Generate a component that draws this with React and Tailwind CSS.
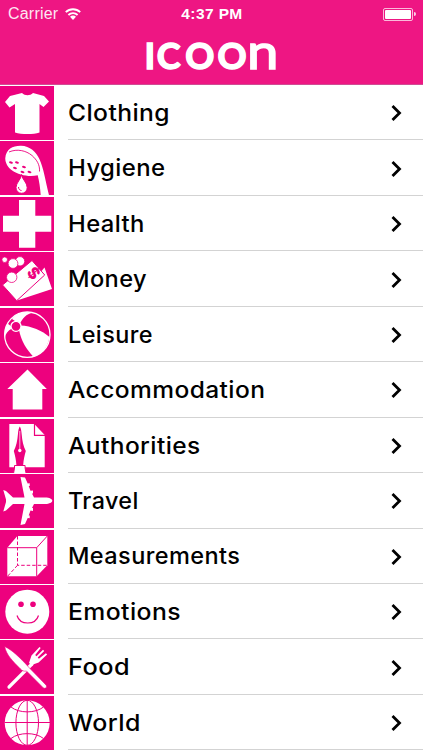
import React from "react";

const PINK = "#ed017e";

// Category icons, all drawn on a 54x54 tile
const ShirtIcon = () => (
    <path
        fill="#fff"
        d="M22 7c3 3 8 3 11 0l11 3 5 5.5-5.5 5.5-4-3v28.500c-6 2-18 2-24.500 0V18l-5.500 3.500L5 16l5-6z"
    />
);

const ShowerIcon = () => (
    <>
        <path
            fill="#fff"
            d="M5.300 17C6 8 13 4.500 21 4.700c9 .3 15 6 18.500 13.500 4 8.500 6 22 9.500 36h-8.300c-.5-8-1.500-14-3-20-8 2-19 0-25.500-4.700C7.500 26 5 21 5.300 17z"
        />
        <path fill="none" stroke={PINK} strokeWidth="0.9" d="M9 11c8-3.500 17-1.500 23 3.500 5 4.500 8 9.500 7.500 16" />
        <g fill={PINK}>
            <ellipse cx="11" cy="21.500" rx="2" ry="1.100" transform="rotate(15 11 21.500)" />
            <ellipse cx="17" cy="21.500" rx="2" ry="1.100" transform="rotate(15 17 21.500)" />
            <ellipse cx="24" cy="26" rx="2" ry="1.100" transform="rotate(15 24 26)" />
            <ellipse cx="15" cy="27" rx="2" ry="1.100" transform="rotate(15 15 27)" />
            <ellipse cx="22.500" cy="31" rx="2" ry="1.100" transform="rotate(15 22.500 31)" />
            <ellipse cx="29.500" cy="31" rx="2" ry="1.100" transform="rotate(15 29.500 31)" />
        </g>
        <path
            fill="#fff"
            stroke={PINK}
            strokeWidth="1"
            d="M21.600 33.500c.5 5 5.600 8 5.600 13.200a5.600 5.600 0 0 1-11.200 0c0-5.200 5.100-8.200 5.600-13.200z"
        />
        <path fill="none" stroke={PINK} strokeWidth="1" d="M18.500 46c0 2 1.200 3.300 3 3.500" />
    </>
);

const CrossIcon = () => <path fill="#fff" d="M19 3h16.300v15.700h16v16h-16v16H19v-16H3v-16h16z" />;

const MoneyIcon = () => (
    <>
        <path fill="#fff" d="M44.500 15.500 52 37 17 48.500z" />
        <path fill="#fff" stroke={PINK} strokeWidth="1" d="M32 8.500 44.700 23 16.700 48.700 2.500 33z" />
        <text
            x="0"
            y="0"
            fill={PINK}
            fontSize="16"
            fontWeight="800"
            textAnchor="middle"
            fontFamily="Inter, sans-serif"
            transform="translate(29.500 25) rotate(48)"
        >
            $
        </text>
        <g fill="#fff" stroke={PINK} strokeWidth="0.8">
            <circle cx="4.700" cy="7.700" r="2.800" />
            <circle cx="20" cy="9.300" r="4.700" />
            <circle cx="13" cy="11.500" r="4.900" />
            <circle cx="11.700" cy="25.300" r="5.200" />
        </g>
    </>
);

const BallIcon = () => (
    <>
        <circle cx="27.300" cy="26.700" r="22.700" fill="none" stroke="#fff" strokeWidth="1.300" />
        <path fill="#fff" d="M15 13C17.500 8 22 4.500 28.500 4c-4-.5-9 .5-13 3.500-2 1.500-3 2.500-3.500 3.500zM20 15.500c2.500-5 6-9.500 13-11-7-1.500-13 0-18 4l-.5 5z" />
        <path fill="#fff" d="M20.500 17.500c11 .5 21.500 5 29 11.500-1.500 10-7.500 17-16 20-7-7.500-12.500-16.500-14.500-27z" />
        <path fill="#fff" d="M11.500 18.500 7.500 15.500C5 20 4 25 4.800 30c.7-4 3-7.500 7.200-9.500z" />
        <circle cx="16" cy="18.300" r="5" fill={PINK} stroke="#fff" strokeWidth="1.300" />
    </>
);

const HouseIcon = () => <path fill="#fff" d="m27.500 6.500 19.300 19.500h-4.500v20.500H12.700V26H7.300z" />;

const PenIcon = () => (
    <>
        <path fill="#fff" d="M9.300 5h25l10.400 11v32.300H9.300z" />
        <path fill="none" stroke={PINK} strokeWidth="1.200" d="M34.500 5v11.300h10.500" />
        <path
            fill={PINK}
            d="M19.800 7.500c1 1.500 1.600 4 1.900 8 .5 6 1.600 11.500 4.100 16.500-1.200 4-2.300 9-2.600 14h-6.800c-.3-5-1.400-10-2.600-14 2.500-5 3.600-10.500 4.100-16.500.3-4 .9-6.500 1.900-8z"
        />
        <path fill="none" stroke="#fff" strokeWidth="0.700" d="M19.800 12v18" />
        <circle cx="19.800" cy="31.500" r="1.700" fill="#fff" />
        <path fill="#fff" stroke={PINK} strokeWidth="1" d="M14.500 46.500h10.600v2.600l1 5.400H13.500l1-5.400z" />
    </>
);

const PlaneIcon = () => (
    <path
        fill="#fff"
        d="M52.300 26.700c0-1.700-3-3.200-7-3.200H34l-2-4h1v-3l-2.500.3-1.800-4.800h1v-2.800l-2 .2L25 3.500 20.500 3l4 20.500H13L6 17l-2.700-1 2.700 9.500v2.400L3.300 37.500 6 36.500l7-6.500h11.500L20.500 51l4.500-1 2.700-6 2 .3v-2.900h-1l1.800-4.900 2.500.4v-3h-1l2-4h11.300c4 0 7-1.600 7-3.200z"
    />
);

const CubeIcon = () => (
    <>
        <path fill="#fff" d="M7.300 17.700 17.300 6h30v29.300l-10.600 11H7.300z" />
        <path fill="none" stroke={PINK} strokeWidth="1" d="M7.300 17.700h29.400v28.600M36.700 17.700 47.300 6" />
        <path fill="none" stroke={PINK} strokeWidth="1" strokeDasharray="3.500 2" d="M17.500 6v29.300h30M17.500 35.300l-10 11" />
    </>
);

const SmileyIcon = () => (
    <>
        <circle cx="27.300" cy="26.700" r="22" fill="#fff" />
        <circle cx="21" cy="19.300" r="2.800" fill={PINK} />
        <circle cx="33" cy="19.300" r="2.800" fill={PINK} />
        <path fill="none" stroke={PINK} strokeWidth="1.200" d="M17 30.500c3 10 18.500 10 21.500 0" />
    </>
);

const CutleryIcon = () => (
    <>
        <path stroke="#fff" strokeWidth="3.200" strokeLinecap="round" d="M9 47 32 24" />
        <path
            fill="#fff"
            d="m29 23 2.500-7.500 8-8.500 1.200 1-5.500 7 1.300 1.200 6.500-6.500 1.200 1.200-6.500 6.500 1.200 1.300 7-5.500 1.200 1.300-8.500 8-7 2.600z"
        />
        <path
            fill="#fff"
            stroke={PINK}
            strokeWidth="0.600"
            d="M4.700 6.500C12 10 19 16.500 29 27.500l17.200 17.700c1.200 2-.8 4-2.800 2.700L26.500 31c-2.500.7-4.500-.3-6.500-2.500C13 21.500 6 14.500 4.700 6.500z"
        />
    </>
);

const GlobeIcon = () => (
    <>
        <circle cx="27.200" cy="26.800" r="22.500" fill="#fff" />
        <g fill="none" stroke={PINK} strokeWidth="1">
            <path d="M27.200 4v45.500M4.500 26.500h45.500" />
            <ellipse cx="27.200" cy="26.800" rx="11.300" ry="22.500" />
            <path d="M11 11c8 6.500 24.500 6.500 32.500 0M11 42.500c8-6.500 24.500-6.500 32.500 0" />
        </g>
    </>
);

// stretch widens the label glyphs a little
const categories = [
    { name: "Clothing", Icon: ShirtIcon, stretch: "scale-x-[1.070]" },
    { name: "Hygiene", Icon: ShowerIcon, stretch: "scale-x-[1.040]" },
    { name: "Health", Icon: CrossIcon, stretch: "scale-x-[1.035]" },
    { name: "Money", Icon: MoneyIcon, stretch: "scale-x-[1.025]" },
    { name: "Leisure", Icon: BallIcon, stretch: "scale-x-[1.020]" },
    { name: "Accommodation", Icon: HouseIcon, stretch: "scale-x-[1.066]" },
    { name: "Authorities", Icon: PenIcon, stretch: "scale-x-[1.065]" },
    { name: "Travel", Icon: PlaneIcon, stretch: "scale-x-[1.015]" },
    { name: "Measurements", Icon: CubeIcon, stretch: "scale-x-[1.022]" },
    { name: "Emotions", Icon: SmileyIcon, stretch: "scale-x-[1.075]" },
    { name: "Food", Icon: CutleryIcon, stretch: "scale-x-[1.100]" },
    { name: "World", Icon: GlobeIcon, stretch: "scale-x-[1.085]" },
];

const StatusBar = () => (
    <div className="grid h-7 grid-cols-3 items-center pl-2 pr-[7px] font-['Liberation_Sans',sans-serif] text-white">
        <div className="flex items-center gap-[7px]">
            <span className="text-[16px] leading-7 tracking-[0.2px] opacity-90">Carrier</span>
            <svg className="h-3 w-4" viewBox="0 0 16 12" fill="none" stroke="#fff" strokeWidth="1.900">
                <path d="M.8 4.200c4-4 10.400-4 14.400 0M3.400 7c2.600-2.500 6.600-2.500 9.200 0" />
                <path fill="#fff" stroke="none" d="M5 8.800c1.700-1.600 4.300-1.600 6 0L8 11.900z" />
            </svg>
        </div>
        <span className="text-center text-[15.500px] font-bold leading-7 tracking-[0.4px]">4:37 PM</span>
        <div className="flex items-center justify-end gap-px">
            <div className="h-[13px] w-[30px] rounded-[2px] border border-white/70 p-px">
                <div className="h-full w-full rounded-[1px] bg-white" />
            </div>
            <div className="h-1 w-[2px] rounded-r-full bg-white/80" />
        </div>
    </div>
);

const Logo = () => (
    <svg
        className="mx-auto h-[56px] w-[140px] overflow-visible"
        viewBox="142 28 140 56"
        fill="#fff"
        stroke="#fff"
        fontFamily="Lato, sans-serif"
    >
        <text y="68.500" fontSize="36" fontWeight="700" strokeWidth="1.500" x="144.500 156.700 185.200 217.500">ICOO</text>
        <text fontSize="49" fontWeight="400" strokeWidth="1.500" transform="translate(247 68.500) scale(1.150 1)">n</text>
    </svg>
);

const App = () => {
    return (
        <div className="h-[750px] w-full overflow-hidden bg-white">
            <header className="h-[85px] border-b border-[#d04c93] bg-[#ee1683]">
                <StatusBar />
                <Logo />
            </header>

            <ul>
                {categories.map(({ name, Icon, stretch }) => (
                    <li key={name} className="flex h-[55.450px]">
                        <div className="w-[54px] shrink-0 pt-[1px]">
                            <svg className="h-[54px] w-[54px] bg-[#ed017e]" viewBox="0 0 54 54">
                                <Icon />
                            </svg>
                        </div>
                        <div className="ml-[14px] flex flex-1 items-center justify-between border-b border-[#d3d3d3] pr-[21px] pt-[2px]">
                            <span
                                className={`origin-left font-['Inter',sans-serif] text-[23px] font-medium tracking-[0.4px] text-black ${stretch}`}
                            >
                                {name}
                            </span>
                            <svg className="h-4 w-[11px]" viewBox="0 0 11 16" fill="none" stroke="#000" strokeWidth="2.800">
                                <path d="m1.500 1 7 7-7 7" />
                            </svg>
                        </div>
                    </li>
                ))}
            </ul>
        </div>
    );
};

export default App;
